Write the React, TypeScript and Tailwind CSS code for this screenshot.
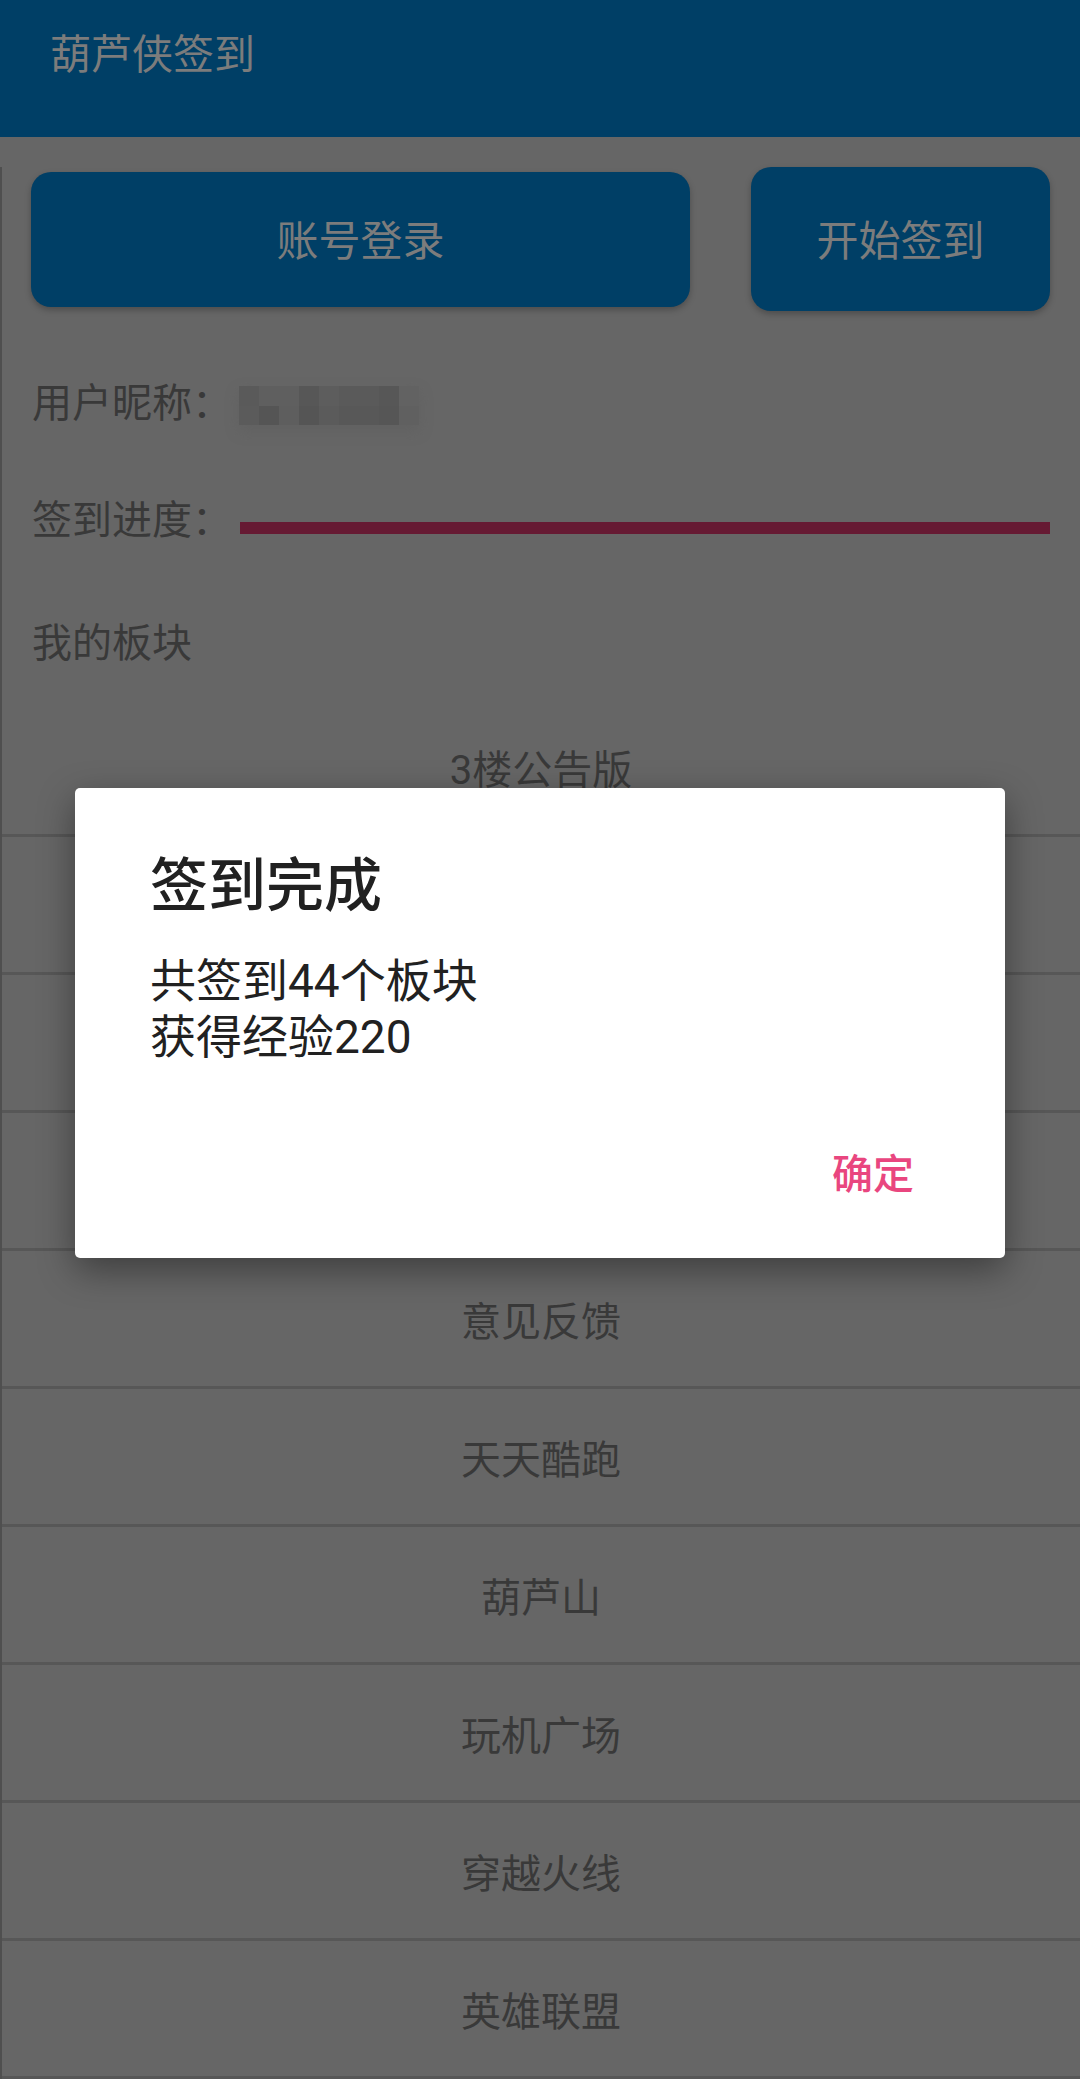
import { useState } from 'react'

const boards = [
  '3楼公告版',
  '新手教程',
  '资源分享',
  '游戏交流',
  '意见反馈',
  '天天酷跑',
  '葫芦山',
  '玩机广场',
  '穿越火线',
  '英雄联盟',
]

// pixelated nickname, two rows of blocks
const blurTop = ['#5a5a5a', '#5f5f5f', '#5f5f5f', '#575757', '#5d5d5d', '#5a5a5a', '#5a5a5a', '#575757', '#626262']
const blurBottom = ['#5b5b5b', '#555555', '#5e5e5e', '#555555', '#5b5b5b', '#585858', '#585858', '#565656', '#606060']

export default function App() {
  const [open, setOpen] = useState(true)

  return (
    <div className="relative h-[2079px] overflow-hidden bg-[#666666] font-['Roboto','Noto_Sans_CJK_SC',sans-serif]">
      {/* Toolbar */}
      <header className="h-[137px] bg-[#003f66] pl-[50px] pt-[31px]">
        <h1 className="text-[41px] leading-[48px] text-[#7c7c7c]">葫芦侠签到</h1>
      </header>

      <div className="border-l-2 border-[#4f4f4f]">
        {/* Action buttons */}
        <div className="mt-[30px] flex h-[144px] items-center gap-[61px] pl-[29px] pr-[30px]">
          <button className="flex h-[135px] w-[659px] items-center justify-center rounded-[20px] bg-[#003f66] pt-[4px] text-[42px] text-[#7c7c7c] shadow-[0_3px_6px_rgba(0,0,0,0.25)]">
            账号登录
          </button>
          <button className="flex h-[144px] w-[299px] items-center justify-center rounded-[20px] bg-[#003f66] pt-[4px] text-[42px] text-[#7c7c7c] shadow-[0_3px_6px_rgba(0,0,0,0.25)]">
            开始签到
          </button>
        </div>

        {/* Nickname */}
        <div className="mt-[69px] flex h-[48px] items-center pl-[30px] text-[40px] leading-[48px] text-[#393939]">
          <span className="w-[200px] shrink-0">用户昵称：</span>
          <div className="ml-[7px] mt-[2px] flex flex-col rounded-[3px] shadow-[0_6px_14px_rgba(90,90,90,0.35)]">
            <div className="flex">
              {blurTop.map((c, i) => (
                <div key={i} className="h-[20px] w-[20px]" style={{ backgroundColor: c }} />
              ))}
            </div>
            <div className="flex">
              {blurBottom.map((c, i) => (
                <div key={i} className="h-[19px] w-[20px]" style={{ backgroundColor: c }} />
              ))}
            </div>
          </div>
        </div>

        {/* Progress */}
        <div className="mt-[69px] flex h-[48px] items-center pl-[30px] pr-[30px] text-[40px] leading-[48px] text-[#393939]">
          <span className="w-[200px] shrink-0">签到进度：</span>
          <div className="ml-[8px] mt-[14px] h-[12px] flex-1 bg-[#661a33]" />
        </div>

        {/* Boards */}
        <div className="mt-[75px] h-[48px] pl-[30px] text-[40px] leading-[48px] text-[#393939]">我的板块</div>

        <ul className="mt-[31px]">
          {boards.map((b) => (
            <li
              key={b}
              className="flex h-[138px] items-center justify-center border-b-[3px] border-[#575757] pt-[9px] text-[40px] text-[#393939]"
            >
              {b}
            </li>
          ))}
        </ul>
      </div>

      {/* Dialog */}
      {open && (
        <div className="absolute left-[75px] top-[788px] flex h-[470px] w-[930px] flex-col rounded-[5px] bg-white pl-[75px] pt-[64px] shadow-[0_12px_36px_rgba(0,0,0,0.4)]">
          <h2 className="text-[58px] font-medium leading-[68px] text-[#212121]">签到完成</h2>
          <p className="mt-[33px] text-[46px] leading-[56px] text-[#212121]">
            共签到44个板块
            <br />
            获得经验220
          </p>
          <div className="mt-[86px] flex justify-end pr-[91px]">
            <button
              onClick={() => setOpen(false)}
              className="text-[41px] font-medium leading-[48px] text-[#e9467f]"
            >
              确定
            </button>
          </div>
        </div>
      )}
    </div>
  )
}
